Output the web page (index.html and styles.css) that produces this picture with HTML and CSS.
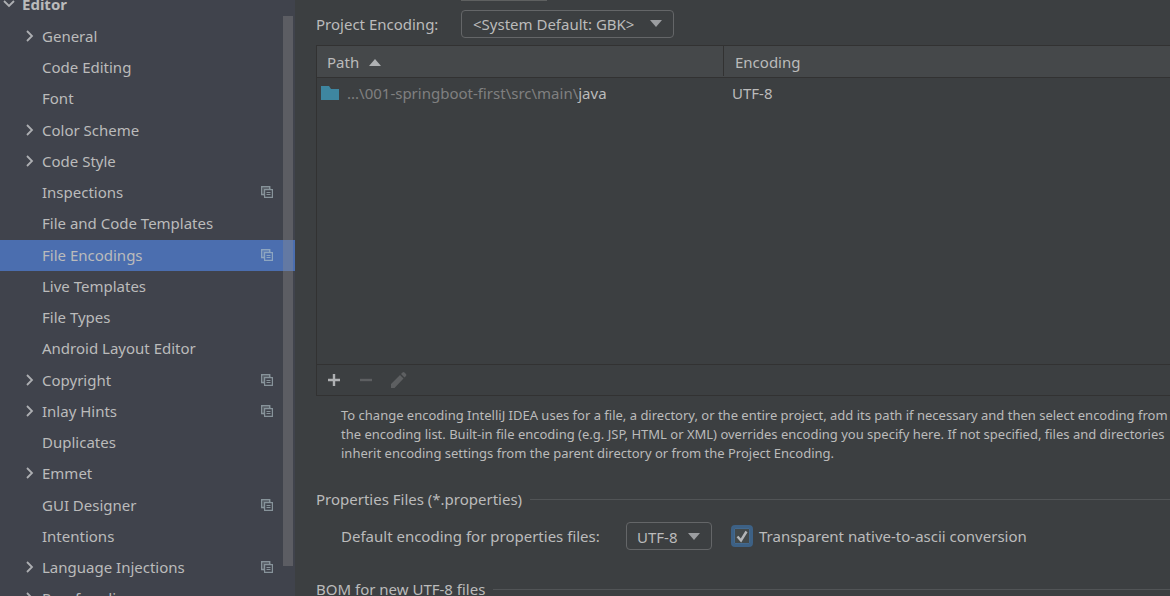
FILE: index.html
```html
<!DOCTYPE html>
<html lang="en">
<head>
<meta charset="utf-8">
<title>Settings - File Encodings</title>
<link rel="stylesheet" href="styles.css">
</head>
<body>
<svg class="sprite" aria-hidden="true">
  <symbol id="right" viewBox="0 0 8 12"><path d="M1 1l5 5-5 5" fill="none" stroke="#adafb2" stroke-width="1.8"/></symbol>
  <symbol id="down" viewBox="0 0 12 8"><path d="M1 1l5 5 5-5" fill="none" stroke="#adafb2" stroke-width="1.8"/></symbol>
  <symbol id="copy" viewBox="0 0 12 12"><path d="M3 8.5H.7V.7h8V3" fill="none" stroke="currentColor" stroke-width="1.4"/><path d="M3.6 3.6h7.8v7.8H3.600z" fill="none" stroke="currentColor" stroke-width="1.2"/><path d="M2.500 9.500v-7h7" fill="none" stroke="currentColor" stroke-width="1" opacity=".4"/><path d="M5.500 6.500h4M5.500 8.500h4" stroke="currentColor"/></symbol>
  <symbol id="arrow" viewBox="0 0 12 7"><path d="M0 0h12L6 7z" fill="#9b9da0"/></symbol>
</svg>
<div class="settings">
  <nav class="sidebar" aria-label="Settings categories">
    <a class="row root" href="#"><svg class="toggle-down"><use href="#down"/></svg><span>Editor</span></a>
    <ul class="tree">
      <li><a class="row" href="#"><svg class="toggle"><use href="#right"/></svg><span>General</span></a></li>
      <li><a class="row" href="#"><span>Code Editing</span></a></li>
      <li><a class="row" href="#"><span>Font</span></a></li>
      <li><a class="row" href="#"><svg class="toggle"><use href="#right"/></svg><span>Color Scheme</span></a></li>
      <li><a class="row" href="#"><svg class="toggle"><use href="#right"/></svg><span>Code Style</span></a></li>
      <li><a class="row" href="#"><span>Inspections</span><svg class="copy"><use href="#copy"/></svg></a></li>
      <li><a class="row" href="#"><span>File and Code Templates</span></a></li>
      <li><a class="row selected" href="#" aria-current="page"><span>File Encodings</span><svg class="copy"><use href="#copy"/></svg></a></li>
      <li><a class="row" href="#"><span>Live Templates</span></a></li>
      <li><a class="row" href="#"><span>File Types</span></a></li>
      <li><a class="row" href="#"><span>Android Layout Editor</span></a></li>
      <li><a class="row" href="#"><svg class="toggle"><use href="#right"/></svg><span>Copyright</span><svg class="copy"><use href="#copy"/></svg></a></li>
      <li><a class="row" href="#"><svg class="toggle"><use href="#right"/></svg><span>Inlay Hints</span><svg class="copy"><use href="#copy"/></svg></a></li>
      <li><a class="row" href="#"><span>Duplicates</span></a></li>
      <li><a class="row" href="#"><svg class="toggle"><use href="#right"/></svg><span>Emmet</span></a></li>
      <li><a class="row" href="#"><span>GUI Designer</span><svg class="copy"><use href="#copy"/></svg></a></li>
      <li><a class="row" href="#"><span>Intentions</span></a></li>
      <li><a class="row" href="#"><svg class="toggle"><use href="#right"/></svg><span>Language Injections</span><svg class="copy"><use href="#copy"/></svg></a></li>
      <li><a class="row" href="#"><svg class="toggle"><use href="#right"/></svg><span>Proofreading</span></a></li>
    </ul>
    <div class="scrollbar"></div>
  </nav>
  <main class="page">
    <div class="combo-edge"></div>
    <div class="field">
      <label for="project">Project Encoding:</label>
      <div class="combo wide">
        <select id="project"><option>&lt;System Default: GBK&gt;</option></select>
        <svg class="arrow"><use href="#arrow"/></svg>
      </div>
    </div>
    <section class="panel">
      <div class="table-area">
        <table>
          <colgroup><col class="path-col"><col></colgroup>
          <thead><tr>
            <th><span class="cell">Path <svg class="sort" viewBox="0 0 12 7"><path d="M0 7h12L6 0z" fill="#afb1b3"/></svg></span></th>
            <th><span class="cell divided">Encoding</span></th>
          </tr></thead>
          <tbody><tr>
            <td><span class="file"><svg class="folder" viewBox="0 0 18 14"><path d="M0 0h8l2 3h8v11H0z" fill="#3e86a0"/></svg><span><span class="dim">...\001-springboot-first\src\main\</span>java</span></span></td>
            <td class="encoding">UTF-8</td>
          </tr></tbody>
        </table>
      </div>
      <div class="toolbar">
        <button type="button" aria-label="Add"><svg viewBox="0 0 18 18"><path d="M9 3v12M3 9h12" stroke="#afb1b3" stroke-width="2.400"/></svg></button>
        <button type="button" aria-label="Remove" disabled><svg viewBox="0 0 18 18"><path d="M3 9h12" stroke="#5d5f61" stroke-width="2.400"/></svg></button>
        <button type="button" aria-label="Edit" disabled><svg viewBox="0 0 18 18"><path d="M2 17v-4L11 4l3.500 3.500L5.500 17zM12 3l1.500-1.500q1-.8 2 0l1.500 1.500q.8 1 0 2L15.500 6.500z" fill="#5d5f61"/></svg></button>
      </div>
    </section>
    <p class="help">To change encoding IntelliJ IDEA uses for a file, a directory, or the entire project, add its path if necessary and then select encoding from<br>the encoding list. Built-in file encoding (e.g. JSP, HTML or XML) overrides encoding you specify here. If not specified, files and directories<br>inherit encoding settings from the parent directory or from the Project Encoding.</p>
    <h2 class="group">Properties Files (*.properties)</h2>
    <div class="properties">
      <label class="props-label" for="props">Default encoding for properties files:</label>
      <div class="combo narrow">
        <select id="props"><option>UTF-8</option></select>
        <svg class="arrow"><use href="#arrow"/></svg>
      </div>
      <label class="check">
        <span class="box"><input type="checkbox" checked><svg viewBox="0 0 22 22"><path d="M6.500 11.500l3.500 4 5.500-9" fill="none" stroke="#b4b6b8" stroke-width="2.400"/></svg></span>
        <span>Transparent native-to-ascii conversion</span>
      </label>
    </div>
    <h2 class="group">BOM for new UTF-8 files</h2>
  </main>
</div>
</body>
</html>
```
FILE: styles.css
```css
* { box-sizing: border-box; }
body {
  margin: 0;
  overflow: hidden;
  background: #3c3f41;
  color: #bbbbbb;
  font: 15px/24px "Noto Sans", "Open Sans", sans-serif;
}
.sprite { position: absolute; width: 0; height: 0; }
svg { display: block; flex: none; }
.settings { display: flex; height: 100vh; overflow: hidden; }

.sidebar {
  position: relative;
  flex: none;
  width: 295px;
  overflow: hidden;
  background: #40434c;
}
.tree { margin: 0; padding: 0; list-style: none; }
.tree li:nth-child(4n+3) { padding-bottom: 1px; }
.row {
  display: flex;
  align-items: center;
  height: 31px;
  padding: 0 22px 1px 42px;
  color: inherit;
  text-decoration: none;
  white-space: nowrap;
}
.root { margin-top: -10px; padding-left: 3px; padding-bottom: 3px; gap: 7px; font-weight: bold; }
.toggle { width: 8px; height: 12px; margin-left: -16px; margin-right: 8px; }
.toggle-down { width: 12px; height: 8px; }
.copy { width: 12px; height: 12px; margin-left: auto; color: #87939a; }
.selected { background: #4b6eaf; }
.selected .copy { color: #8da5c0; }
.scrollbar {
  position: absolute;
  top: 16px;
  bottom: 30px;
  right: 2px;
  width: 10px;
  background: rgba(140, 140, 140, .36);
}

.page { flex: 1; min-width: 0; padding-left: 21px; }
.combo-edge {
  width: 86px;
  height: 1px;
  margin-left: 145px;
  background: #5e6060;
}
.field { display: flex; align-items: center; height: 44px; padding-top: 1px; }
.field label { width: 145px; }
.combo { display: grid; align-items: center; height: 28px; }
.combo select {
  grid-area: 1 / 1;
  width: 100%;
  height: 100%;
  padding: 1px 11px 0;
  border: 1px solid #646668;
  border-radius: 4px;
  appearance: none;
  background: #3c3f41;
  color: inherit;
  font: inherit;
}
.arrow {
  grid-area: 1 / 1;
  justify-self: end;
  width: 12px;
  height: 7px;
  margin-right: 12px;
  pointer-events: none;
}
.wide { width: 213px; }
.narrow { width: 86px; }
.narrow select { padding-left: 10px; padding-right: 10px; }

.panel { border: 1px solid #323232; border-right: 0; }
.table-area { min-height: 318px; }
table { width: 100%; border-collapse: collapse; table-layout: fixed; }
.path-col { width: 407px; }
th, td { padding: 0; font-weight: normal; text-align: left; }
th { height: 31px; border-bottom: 1px solid #323232; background: #45484a; }
td { height: 31px; }
.cell { display: flex; align-items: center; gap: 10px; height: 30px; padding: 2px 0 0 10px; }
.divided { margin-left: -1px; padding-left: 11px; border-left: 1px solid #323232; }
.sort { width: 12px; height: 7px; }
.file { display: flex; align-items: center; gap: 8px; padding-left: 4px; }
.folder { width: 18px; height: 14px; }
.dim { color: #808080; }
.encoding { padding-left: 8px; }
.toolbar {
  display: flex;
  align-items: center;
  gap: 14px;
  height: 31px;
  padding-left: 8px;
  border-top: 1px solid #323232;
}
.toolbar button { width: 18px; height: 18px; padding: 0; border: 0; background: none; }
.toolbar svg { width: 18px; height: 18px; }

.help {
  margin: 10px 0 24px;
  padding-left: 25px;
  font-size: 13px;
  line-height: 19px;
  white-space: nowrap;
}
.group {
  display: flex;
  align-items: center;
  gap: 8px;
  margin: 0;
  font-size: 15px;
  font-weight: normal;
  white-space: nowrap;
}
.group::after { content: ""; flex: 1; height: 1px; background: #515456; }
.properties {
  display: flex;
  align-items: center;
  height: 28px;
  margin: 11px 0 27px;
  padding-left: 25px;
  white-space: nowrap;
}
.props-label { width: 285px; }
.check { display: flex; align-items: center; gap: 6px; margin-left: 19px; }
.box { display: grid; width: 22px; height: 22px; }
.box input {
  grid-area: 1 / 1;
  width: 22px;
  height: 22px;
  margin: 0;
  border: 3px solid #3d6185;
  border-radius: 4px;
  appearance: none;
  background: #43494a;
  box-shadow: inset 0 0 0 1px #43698e;
}
.box svg { grid-area: 1 / 1; width: 22px; height: 22px; pointer-events: none; }
```
